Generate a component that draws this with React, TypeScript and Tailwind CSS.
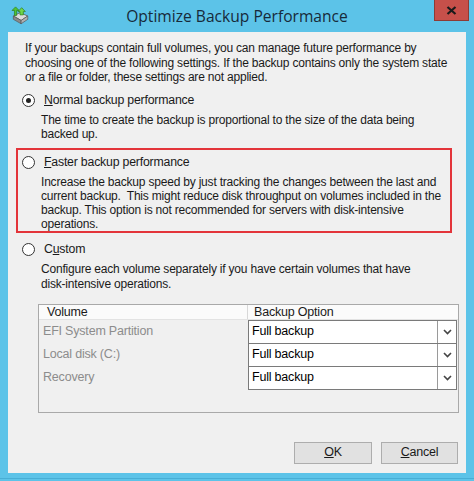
import React from "react";

const font = { fontFamily: '"Liberation Sans", Arial, sans-serif' };

function Radio({ checked }: { checked?: boolean }) {
  return (
    <div className="w-[13px] h-[13px] rounded-full border border-[#333333] bg-white flex items-center justify-center shrink-0">
      {checked && <div className="w-[5px] h-[5px] rounded-full bg-[#222222]" />}
    </div>
  );
}

function Combo() {
  return (
    <div className="flex h-[24px] border border-[#7a7a7a] bg-white -mt-px first:mt-0">
      <div className="flex-1 flex items-center pl-[3px] text-[12.5px] tracking-[-0.2px] text-black">Full backup</div>
      <div className="w-[19px] border-l border-[#9a9a9a] flex items-center justify-center">
        <svg width="9" height="6" viewBox="0 0 9 6">
          <path d="M1 1 L4.5 4.5 L8 1" fill="none" stroke="#444" strokeWidth="1.6" />
        </svg>
      </div>
    </div>
  );
}

export default function App() {
  return (
    <div className="w-[474px] h-[481px] bg-[#5cc3e8] flex flex-col overflow-hidden" style={font}>
      {/* title bar */}
      <div className="h-[32px] grid grid-cols-[1fr_auto_1fr] shrink-0">
        <div className="flex items-start pt-[6px] pl-[10px]">
          <svg width="20" height="20" viewBox="0 0 18 18">
            <path d="M3 9 L9 6 L16 9 L10 13 Z" fill="#dcdcdc" stroke="#666" strokeWidth="0.8" />
            <path d="M3 9 L3 12 L10 16 L10 13 Z" fill="#8a8a8a" stroke="#555" strokeWidth="0.6" />
            <path d="M10 13 L10 16 L16 12 L16 9 Z" fill="#b0b0b0" stroke="#555" strokeWidth="0.6" />
            <path d="M4 8.5 L4 4 L1.8 4 L5 0.8 L8.2 4 L6 4 L6 8.5 Z" fill="#4fc332" stroke="#2a7a1a" strokeWidth="0.6" />
            <path d="M9 8 L9 5 L7.2 5 L10.5 1.5 L13.8 5 L12 5 L12 8 Z" fill="#6fd64a" stroke="#2a7a1a" strokeWidth="0.6" />
          </svg>
        </div>
        <div className="flex items-center justify-center text-[15.6px] text-[#172a3a] pt-[1px]" style={{ fontFamily: '"Open Sans", "Liberation Sans", sans-serif' }}>
          Optimize Backup Performance
        </div>
        <div className="flex justify-end pr-[5px]">
          <div className="w-[35px] h-[21px] bg-[#c7504a] border border-[#8e3b35] border-t-0 flex items-center justify-center">
            <svg width="11" height="9" viewBox="0 0 11 9">
              <path d="M1.5 1 L9.5 8 M9.5 1 L1.5 8" stroke="#1a1a1a" strokeWidth="2.2" />
            </svg>
          </div>
        </div>
      </div>

      {/* client area */}
      <div className="mx-[8px] h-[441px] bg-[#f0f0f0] flex flex-col text-[12px] tracking-[-0.2px] text-[#1a1a1a] leading-[14.5px] shrink-0">
        <p className="pl-[17px] pr-[10px] pt-[9px]">
          If your backups contain full volumes, you can manage future performance by choosing one of the following settings. If the backup contains only the system state or a file or folder, these settings are not applied.
        </p>

        <div className="flex items-center gap-[9px] pl-[14px] mt-[8px] h-[15px] text-[12.3px]">
          <Radio checked />
          <span><span className="underline">N</span>ormal backup performance</span>
        </div>
        <p className="pl-[33px] pr-[20px] mt-[5px]">
          The time to create the backup is proportional to the size of the data being backed up.
        </p>

        <div className="mx-[8px] w-[436px] mt-[6px] h-[85px] border-2 border-[#e3343a] pt-[5px]">
          <div className="flex items-center gap-[9px] pl-[4px] h-[15px] text-[12.3px]">
            <Radio />
            <span><span className="underline">F</span>aster backup performance</span>
          </div>
          <p className="pl-[23px] pr-[4px] mt-[5px] leading-[14px]">
            Increase the backup speed by just tracking the changes between the last and current backup.&nbsp; This might reduce disk throughput on volumes included in the backup. This option is not recommended for servers with disk-intensive operations.
          </p>
        </div>

        <div className="flex items-center gap-[9px] pl-[14px] mt-[9px] h-[15px] text-[12.3px]">
          <Radio />
          <span>C<span className="underline">u</span>stom</span>
        </div>
        <p className="pl-[33px] pr-[40px] mt-[5px] leading-[15px]">
          Configure each volume separately if you have certain volumes that have disk-intensive operations.
        </p>

        <div className="ml-[30px] w-[421px] h-[109px] mt-[12px] border border-[#a9a9a9] bg-[#f0f0f0] flex flex-col">
          <div className="h-[15px] flex bg-[#fbfbfb] border-b border-[#e3e3e3] text-[12.5px] leading-[15px]">
            <div className="w-[209px] pl-[8px] border-r border-[#d8d8d8]">Volume</div>
            <div className="pl-[6px]">Backup Option</div>
          </div>
          <div className="flex">
            <div className="w-[209px] flex flex-col text-[#8c8c8c] pl-[4px] text-[12.5px]">
              <div className="h-[23px] flex items-center">EFI System Partition</div>
              <div className="h-[23px] flex items-center">Local disk (C:)</div>
              <div className="h-[23px] flex items-center">Recovery</div>
            </div>
            <div className="w-[209px] flex flex-col">
              <Combo />
              <Combo />
              <Combo />
            </div>
          </div>
        </div>

        <div className="flex justify-end gap-[9px] pr-[8px] mt-[29px] text-[12.5px]">
          <div className="w-[78px] h-[22px] bg-[#e1e1e1] border border-[#adadad] flex items-center justify-center">
            <span><span className="underline">O</span>K</span>
          </div>
          <div className="w-[77px] h-[22px] bg-[#e1e1e1] border border-[#adadad] flex items-center justify-center">
            <span><span className="underline">C</span>ancel</span>
          </div>
        </div>
      </div>
      <div className="h-[5px]" />
      <div className="h-[1px] bg-[#3aa0c8] opacity-60" />
    </div>
  );
}
